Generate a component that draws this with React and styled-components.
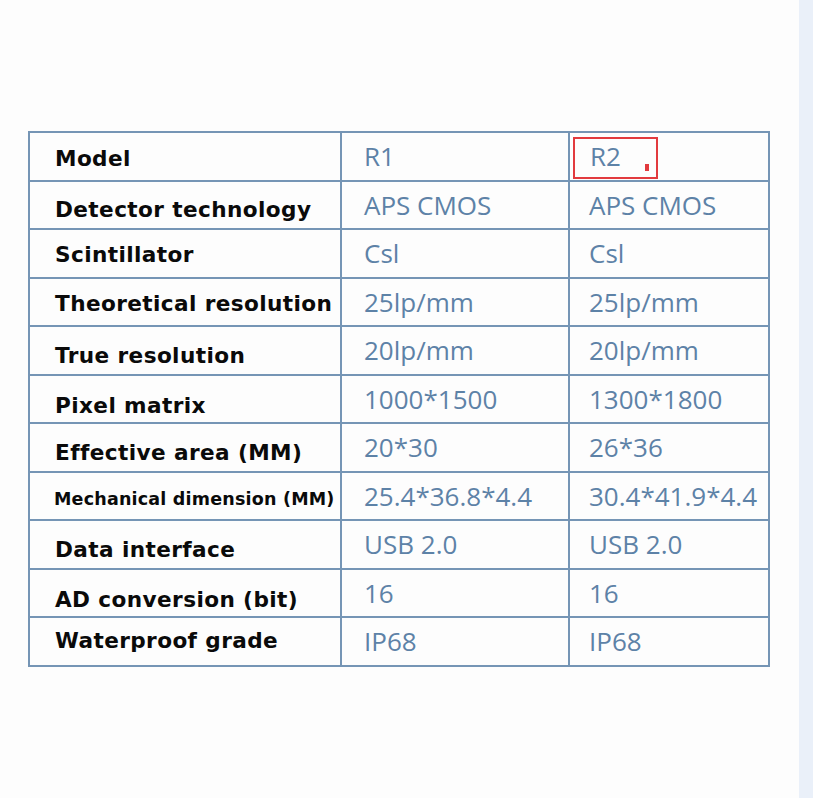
import styled, { createGlobalStyle } from "styled-components";

const GlobalStyle = createGlobalStyle`
  html, body {
    margin: 0;
    padding: 0;
    background: #ffffff;
  }
`;

const rows = [
  { label: "Model", r1: "R1", r2: "R2", shift: 3 },
  { label: "Detector technology", r1: "APS CMOS", r2: "APS CMOS", shift: 5 },
  { label: "Scintillator", r1: "Csl", r2: "Csl", shift: 2 },
  { label: "Theoretical resolution", r1: "25lp/mm", r2: "25lp/mm", shift: 2 },
  { label: "True resolution", r1: "20lp/mm", r2: "20lp/mm", shift: 6 },
  { label: "Pixel matrix", r1: "1000*1500", r2: "1300*1800", shift: 7 },
  { label: "Effective area (MM)", r1: "20*30", r2: "26*36", shift: 6 },
  { label: "Mechanical dimension (MM)", r1: "25.4*36.8*4.4", r2: "30.4*41.9*4.4", shift: 3, small: true },
  { label: "Data interface", r1: "USB 2.0", r2: "USB 2.0", shift: 6 },
  { label: "AD conversion (bit)", r1: "16", r2: "16", shift: 7 },
  { label: "Waterproof grade", r1: "IP68", r2: "IP68", shift: 0 },
];

function App() {
  return (
    <Page>
      <GlobalStyle />
      <Main>
        <SpecTable>
          <colgroup>
            <col style={{ width: 312 }} />
            <col style={{ width: 228 }} />
            <col style={{ width: 200 }} />
          </colgroup>
          <tbody>
            {rows.map((row, i) => (
              <Row key={row.label}>
                <Label $shift={row.shift} $small={row.small}>{row.label}</Label>
                <Value>{row.r1}</Value>
                <Value $wide>
                  {i === 0 ? (
                    <Marked>
                      {row.r2}
                      <Dot />
                    </Marked>
                  ) : (
                    row.r2
                  )}
                </Value>
              </Row>
            ))}
          </tbody>
        </SpecTable>
      </Main>
      <SideStrip />
    </Page>
  );
}

export default App;

const Page = styled.div`
  display: flex;
  width: 813px;
  height: 798px;
  overflow: hidden;
`;

const Main = styled.div`
  flex: 1;
  padding: 131px 0 0 28px;
  background: #fdfdfd;
`;

const SideStrip = styled.div`
  width: 14px;
  background: #eaf0f9;
`;

const SpecTable = styled.table`
  border-collapse: collapse;
  table-layout: fixed;
  width: 742px;
  border: 2px solid #7595b5;

  td {
    border: 2px solid #7595b5;
    padding: 0;
    vertical-align: middle;
    white-space: nowrap;
    line-height: 30px;
  }
`;

const Row = styled.tr`
  height: 48.5px;
`;

const Label = styled.td`
  && {
    padding: ${(p) => p.$shift * 2}px 0 0 ${(p) => (p.$small ? 24 : 25)}px;
  }
  font-family: "DejaVu Sans", Verdana, sans-serif;
  font-weight: bold;
  font-size: ${(p) => (p.$small ? "17.5px" : "21.6px")};
  letter-spacing: ${(p) => (p.$small ? "0.2px" : "0.4px")};
  color: #0a0a0a;
`;

const Value = styled.td`
  && {
    padding: 0 0 0 ${(p) => (p.$wide ? 19 : 22)}px;
  }
  font-family: "Open Sans", "Noto Sans", sans-serif;
  font-size: 26px;
  color: #5d82a7;
`;

const Marked = styled.span`
  position: relative;
  display: inline-block;
  box-sizing: border-box;
  width: 85px;
  height: 42px;
  margin: 4px 0 0 -16px;
  padding: 1px 0 0 15px;
  border: 2px solid #e23a3e;
  line-height: 32px;
`;

const Dot = styled.span`
  position: absolute;
  left: 70px;
  top: 25px;
  width: 4px;
  height: 7px;
  background: #e23a3e;
`;
